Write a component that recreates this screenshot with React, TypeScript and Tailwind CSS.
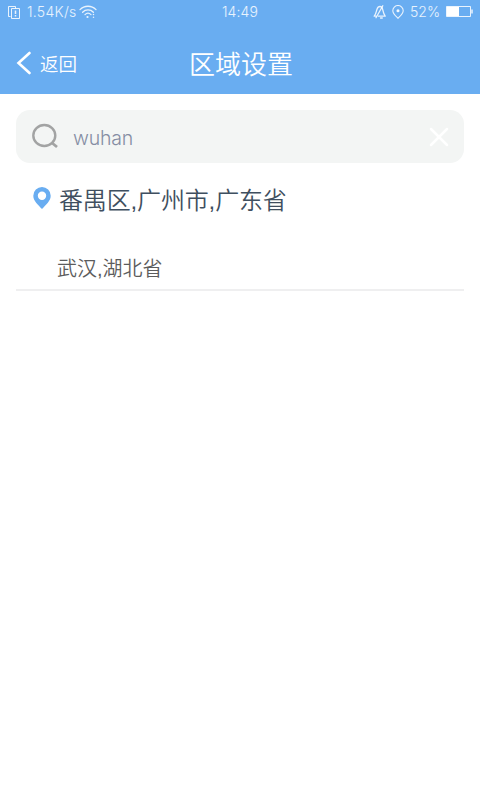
import { useState } from "react";

interface Region {
  id: string;
  name: string;
}

const currentRegion = "番禺区,广州市,广东省";

const results: Region[] = [{ id: "wuhan", name: "武汉,湖北省" }];

function StatusBar() {
  return (
    <div className="relative flex h-6 items-center justify-between pl-2 pr-[7px] text-[14px] leading-6 text-white/85 font-['Inter','Noto_Sans_CJK_SC',sans-serif] font-light">
      <div className="flex items-center">
        <svg width="12" height="14" viewBox="0 0 12 14" fill="none" stroke="currentColor" className="mr-[7px]">
          <path d="M2.5 11.5h-2v-10h7v2" />
          <path d="M3.5 3.5h8v10h-8z" />
          <path d="M7.5 5.5V9M7.5 10v1.5" strokeWidth="1.5" />
        </svg>
        <span className="w-[52px] whitespace-nowrap tracking-[0.3px]">1.54K/s</span>
        <svg width="18" height="14" viewBox="0 0 18 14" fill="none" stroke="currentColor" strokeWidth="1.3" strokeLinecap="round">
          <path d="M1 4.6C5.4.1 12.6.1 17 4.6" />
          <path d="M3.6 7.2c3-3 7.8-3 10.8 0" />
          <path d="M6 9.6c1.8-1.7 4.2-1.7 6 0" />
          <circle cx="8.5" cy="12" r="1.1" fill="currentColor" stroke="none" />
          <path d="M14.5 9.5v.1M14.5 12.2v.1" strokeWidth="1.5" />
        </svg>
      </div>
      <span className="absolute left-1/2 -translate-x-1/2 tracking-[0.15px]">14:49</span>
      <div className="flex items-center">
        <svg width="13" height="14" viewBox="0 0 13 14" fill="none" stroke="currentColor" strokeWidth="1.3" strokeLinecap="round" strokeLinejoin="round" className="mr-[6px]">
          <path d="M3 11.2H1.2C3 9 3.2 6.600 4 4.2 4.6 2.4 5.5 1.500 7 1.500s2.2 1 2.6 2.700c.6 2.6.9 4.8 2.6 7H5.5" />
          <path d="M9.8.8L3 12.8M7.500 13h1.800" />
        </svg>
        <svg width="12" height="14" viewBox="0 0 12 14" fill="none" stroke="currentColor" strokeWidth="1.1" className="mr-[6px]">
          <path d="M6 13.3C3.5 10.8.8 8.5.8 5.7a5.2 5.2 0 0 1 10.4 0c0 2.8-2.7 5.1-5.2 7.6z" />
          <circle cx="6" cy="5.7" r="1" fill="currentColor" />
        </svg>
        <span className="w-9 whitespace-nowrap">52%</span>
        <svg width="27" height="12" viewBox="0 0 27 12" fill="none" stroke="currentColor">
          <path d="M.5.5h24v10H.5z" />
          <path d="M1 1h12v9H1z" fill="white" stroke="none" />
          <path d="M26 3.5v4" strokeWidth="1.5" />
        </svg>
      </div>
    </div>
  );
}

function Header() {
  return (
    <header className="h-[94px] bg-[#69adf1] text-white">
      <StatusBar />
      <div className="grid h-[70px] grid-cols-3 items-center pt-[9px]">
        <button className="flex items-center pl-4 text-[18.5px] leading-6 font-[350]">
          <svg width="15" height="24" viewBox="0 0 15 24" fill="none" stroke="currentColor" strokeWidth="2.6" strokeLinecap="round" className="mr-[9px] -mt-px shrink-0">
            <path d="M13.5 2L2.5 12l11 10" />
          </svg>
          <span className="whitespace-nowrap pt-[2px]">返回</span>
        </button>
        <h1 className="whitespace-nowrap pl-[2px] pt-[3px] text-center text-[26px] leading-8 font-[350]">区域设置</h1>
      </div>
    </header>
  );
}

export default function App() {
  const [query, setQuery] = useState("wuhan");

  return (
    <div className="min-h-screen bg-white font-['Liberation_Sans','Noto_Sans_CJK_SC',sans-serif] font-[350]">
      <Header />
      <main className="px-4 pt-4">
        <div className="flex h-[53px] items-center rounded-[14px] bg-[#f3f5f4] px-4">
          <svg width="27" height="27" viewBox="0 0 27 27" fill="none" stroke="#a2a3a3" strokeWidth="2.4" className="shrink-0">
            <ellipse cx="12.3" cy="12.5" rx="11" ry="10.5" />
            <path d="M19.5 19.5l5.500 4.500" strokeWidth="2.8" />
          </svg>
          <input
            value={query}
            onChange={(e) => setQuery(e.target.value)}
            className="ml-[14px] min-w-0 flex-1 bg-transparent pt-[2px] text-[19.5px] leading-7 tracking-[-0.2px] text-[#858da3] outline-none font-['Inter','Noto_Sans_CJK_SC',sans-serif] font-light"
          />
          <button onClick={() => setQuery("")} className="-mr-px shrink-0">
            <svg width="20" height="20" viewBox="0 0 20 20" fill="none" stroke="white" strokeWidth="2.5" strokeLinecap="round">
              <path d="M2 2l16 16M18 2L2 18" />
            </svg>
          </button>
        </div>

        <div className="mt-[18px] flex h-9 items-center pl-[17px] text-[24px] text-[#3f4f60]">
          <svg width="18" height="22" viewBox="0 0 18 22" fill="#69adf1" className="mr-2 mt-[-3px] shrink-0">
            <path fillRule="evenodd" d="M9 0a8.7 8.7 0 0 0-8.7 8.7C.3 14 5 17.5 9 22c4-4.5 8.7-8 8.7-13.3A8.7 8.7 0 0 0 9 0zm0 4.500a4.2 4.2 0 1 1 0 8.4 4.2 4.2 0 0 1 0-8.4z" />
          </svg>
          <span className="whitespace-nowrap pt-[3px] leading-9 tracking-[-0.15px]">{currentRegion}</span>
        </div>

        <ul className="mt-[29px]">
          {results.map((region) => (
            <li key={region.id} className="h-[45px] border-b-2 border-[#efeff0] pl-[41px] pt-[8px] text-[20px] leading-[30px] text-[#5c5c5c]">
              {region.name}
            </li>
          ))}
        </ul>
      </main>
    </div>
  );
}
